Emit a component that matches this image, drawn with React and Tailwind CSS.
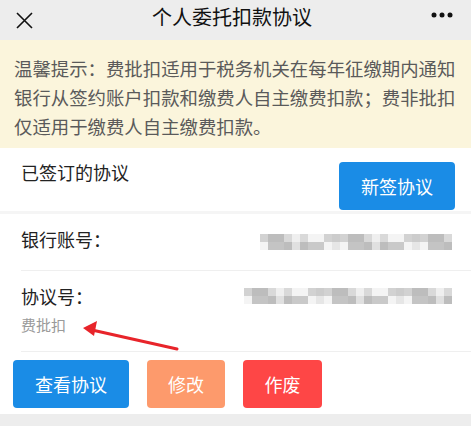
import React from 'react';

const grays = ['#d9d9d9', '#c9c9c9', '#e6e6e6', '#bdbdbd', '#efefef', '#d2d2d2', '#c4c4c4', '#e0e0e0', '#f4f4f4', '#cccccc'];

function Mosaic({ width, seed }) {
  const cols = Math.floor(width / 8);
  const rects = [];
  for (let r = 0; r < 2; r++) {
    for (let c = 0; c < cols; c++) {
      const i = (c * 7 + r * 3 + seed * 5 + ((c * c) % 5)) % grays.length;
      rects.push(<rect key={r + '-' + c} x={c * 8} y={r * 8} width="8" height="8" fill={grays[i]} />);
    }
  }
  return (
    <svg width={cols * 8} height="16" className="block">
      {rects}
    </svg>
  );
}

export default function App() {
  return (
    <div className="relative w-[471px] h-[426px] overflow-hidden bg-[#ededed] font-['Noto_Sans_CJK_SC',sans-serif]">
      {/* top bar */}
      <div className="h-[40px] flex items-center justify-between px-[16px] bg-[#ededed]">
        <svg width="17" height="17" viewBox="0 0 17 17">
          <path d="M1 1 L16 16 M16 1 L1 16" stroke="#111" strokeWidth="1.6" />
        </svg>
        <div className="text-[20px] leading-[28px] text-[#111] -mt-[6px]">个人委托扣款协议</div>
        <svg width="22" height="6" viewBox="0 0 22 6" className="-mt-[10px] mr-[2px]">
          <circle cx="3" cy="3" r="2.5" fill="#111" />
          <circle cx="11" cy="3" r="2.5" fill="#111" />
          <circle cx="19" cy="3" r="2.5" fill="#111" />
        </svg>
      </div>

      {/* notice */}
      <div className="h-[108px] bg-[#fbf5dc] pl-[14px] pr-[12px] pt-[14px] text-[18.4px] leading-[29px] text-[#5a5a5a]">
        温馨提示：费批扣适用于税务机关在每年征缴期内通知银行从签约账户扣款和缴费人自主缴费扣款；费非批扣仅适用于缴费人自主缴费扣款。
      </div>

      {/* signed header */}
      <div className="h-[63px] bg-white flex items-start justify-between pl-[21px] pr-[16px] pt-[12px]">
        <div className="text-[18px] leading-[24px] text-[#222]">已签订的协议</div>
        <button className="w-[116px] h-[48px] mt-[2px] rounded-[4px] bg-[#1a8ce6] text-white text-[18px]">新签协议</button>
      </div>
      <div className="h-[3px] bg-[#f5f5f5]" />

      {/* agreement card */}
      <div className="bg-white">
        <div className="ml-[21px] h-[57px] flex items-center justify-between pr-[19px] border-b border-[#efefef]">
          <div className="text-[18px] leading-[24px] text-[#222] -mt-[6px]">银行账号：</div>
          <Mosaic width={197} seed={1} />
        </div>
        <div className="ml-[21px] h-[81px] pt-[13px] border-b border-[#efefef] pr-[19px]">
          <div className="flex items-center justify-between">
            <div className="text-[18px] leading-[24px] text-[#222]">协议号：</div>
            <Mosaic width={215} seed={3} />
          </div>
          <div className="mt-[7px] text-[15px] leading-[20px] text-[#9a9a9a]">费批扣</div>
        </div>
        <div className="h-[62px] flex gap-[18px] pl-[13px] pt-[8px]">
          <button className="w-[116px] h-[48px] rounded-[4px] bg-[#1a8ce6] text-white text-[18px]">查看协议</button>
          <button className="w-[78px] h-[48px] rounded-[4px] bg-[#fd9a6c] text-white text-[18px]">修改</button>
          <button className="w-[79px] h-[48px] rounded-[4px] bg-[#fe4646] text-white text-[18px]">作废</button>
        </div>
      </div>

      {/* annotation arrow */}
      <svg className="absolute left-0 top-0 pointer-events-none" width="471" height="426">
        <line x1="177" y1="349" x2="92" y2="330" stroke="#e8242a" strokeWidth="3" strokeLinecap="round" />
        <path d="M83 328 L97 321 L94 336 Z" fill="#e8242a" />
      </svg>
    </div>
  );
}
